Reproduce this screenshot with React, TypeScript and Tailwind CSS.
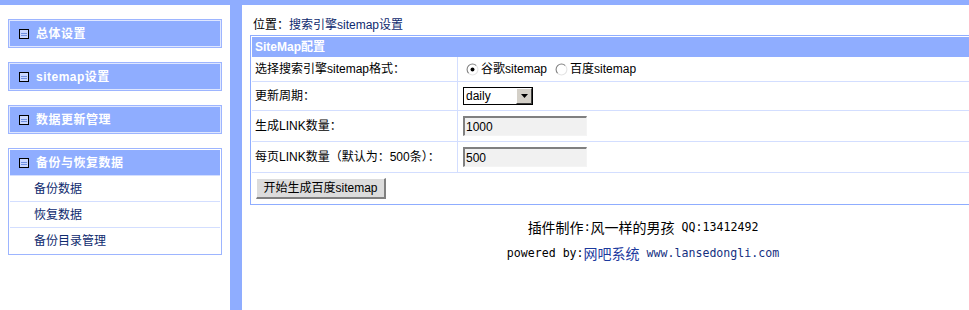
import React from "react";

const navy = "text-[#0e2a6e]";

function MenuIcon() {
    return (
        <svg width="10" height="10" viewBox="0 0 10 10" className="shrink-0">
            <rect x="0.5" y="0.5" width="9" height="9" fill="#c9d7ff" stroke="#000" />
            <line x1="2" y1="4.5" x2="8" y2="4.5" stroke="#6f8fe0" />
            <line x1="2" y1="6.5" x2="8" y2="6.5" stroke="#6f8fe0" />
        </svg>
    );
}

function MenuHeader({ title }: { title: string }) {
    return (
        <div className="flex items-center gap-[7px] pl-[9px] h-[25px] bg-[#8fadff] text-white font-bold text-[12px] tracking-[0.5px]">
            <MenuIcon />
            <span>{title}</span>
        </div>
    );
}

function MenuBox({ title }: { title: string }) {
    return (
        <div className="border border-[#9db5ff] p-[1px] bg-[#dfe7ff]">
            <MenuHeader title={title} />
        </div>
    );
}

function Radio({ checked }: { checked?: boolean }) {
    return (
        <svg width="13" height="13" viewBox="0 0 12 12" className="shrink-0">
            <circle cx="6" cy="6" r="5" fill="#fff" />
            <path d="M2.46 9.54 A5 5 0 0 1 9.54 2.46" fill="none" stroke="#808080" strokeWidth="1" />
            <path d="M9.54 2.46 A5 5 0 0 1 2.46 9.54" fill="none" stroke="#e4e4e4" strokeWidth="1" />
            {checked && <circle cx="6" cy="6" r="1.8" fill="#000" />}
        </svg>
    );
}

function TextInput({ value }: { value: string }) {
    return (
        <div className="w-[124px] h-[20px] bg-[#f1f1f1] border-t-2 border-l-2 border-t-[#808080] border-l-[#808080] border-r border-b border-r-[#f4f4f4] border-b-[#f4f4f4] flex items-center pl-[1px] text-[12px] text-black">
            {value}
        </div>
    );
}

function Row({ label, h, children }: { label: string; h: string; children: React.ReactNode }) {
    return (
        <div className={`flex border-b border-[#d3deff] ${h}`}>
            <div className="w-[206px] shrink-0 border-r border-[#d3deff] flex items-center pl-[3px]">{label}</div>
            <div className="flex items-center pl-[5px]">{children}</div>
        </div>
    );
}

export default function App() {
    return (
        <div className="w-full h-[310px] overflow-hidden bg-white text-[12px] text-black font-['Liberation_Sans','Noto_Sans_CJK_SC',sans-serif]">
            <div className="h-[5px] bg-[#8fadff]" />
            <div className="flex h-[305px]">
                {/* Sidebar */}
                <aside className="w-[230px] shrink-0 px-[8px] pt-[14px] flex flex-col gap-[14px]">
                    <MenuBox title="总体设置" />
                    <MenuBox title="sitemap设置" />
                    <MenuBox title="数据更新管理" />
                    <div className="border border-[#9db5ff] p-[1px] bg-white">
                        <MenuHeader title="备份与恢复数据" />
                        {["备份数据", "恢复数据", "备份目录管理"].map((item) => (
                            <div key={item} className={`h-[26px] border-t border-[#d3deff] flex items-center pl-[24px] ${navy}`}>
                                {item}
                            </div>
                        ))}
                    </div>
                </aside>

                <div className="w-[12px] shrink-0 bg-[#8fadff]" />

                {/* Main */}
                <main className="w-[794px] shrink-0 pl-[8px] pt-[11px]">
                    <div className="leading-[18px] pl-[3px]">
                        位置：<span className={navy}>搜索引擎sitemap设置</span>
                    </div>

                    <div className="mt-[1px] border border-[#8fadff] p-[1px]">
                        <div className="h-[20px] bg-[#8fadff] text-white font-bold flex items-center pl-[3px]">SiteMap配置</div>
                        <Row label="选择搜索引擎sitemap格式：" h="h-[25px]">
                            <div className="flex items-center pl-[3px]">
                                <Radio checked />
                                <span className="ml-[2px]">谷歌sitemap</span>
                                <span className="ml-[8px]"><Radio /></span>
                                <span className="ml-[2px]">百度sitemap</span>
                            </div>
                        </Row>
                        <Row label="更新周期：" h="h-[29px]">
                            <div className="w-[70px] h-[18px] border border-black bg-white flex">
                                <span className="flex-1 pl-[2px] leading-[16px]">daily</span>
                                <span className="w-[16px] h-[16px] bg-[#d4d0c8] border-t border-l border-t-white border-l-white border-r border-b border-r-[#404040] border-b-[#404040] flex items-center justify-center">
                                    <svg width="7" height="4" viewBox="0 0 7 4">
                                        <polygon points="0,0 7,0 3.5,4" fill="#000" />
                                    </svg>
                                </span>
                            </div>
                        </Row>
                        <Row label="生成LINK数量：" h="h-[31px]">
                            <TextInput value="1000" />
                        </Row>
                        <Row label="每页LINK数量（默认为：500条）：" h="h-[31px]">
                            <TextInput value="500" />
                        </Row>
                        <div className="h-[30px] flex items-center pl-[4px]">
                            <button className="w-[130px] h-[21px] bg-[#dcdcdc] border-t border-l border-t-white border-l-white border-r-2 border-b-2 border-r-[#808080] border-b-[#808080] text-[12px] text-black">
                                开始生成百度sitemap
                            </button>
                        </div>
                    </div>

                    <div className="mt-[13px] h-[20px] flex items-center justify-center font-['DejaVu_Sans_Mono','Noto_Sans_CJK_SC',monospace] text-[11.6px]">
                        <span className="text-[14px]">插件制作</span>:<span className="text-[14px]">风一样的男孩</span>&nbsp;QQ:13412492
                    </div>
                    <div className="mt-[6px] h-[20px] flex items-center justify-center font-['DejaVu_Sans_Mono','Noto_Sans_CJK_SC',monospace] text-[11.6px] whitespace-pre">
                        powered by:<span className="text-[14px] text-[#1c3a9e]">网吧系统</span>
                        <span className="text-[#14307f]"> www.lansedongli.com</span>
                    </div>
                </main>
            </div>
        </div>
    );
}
